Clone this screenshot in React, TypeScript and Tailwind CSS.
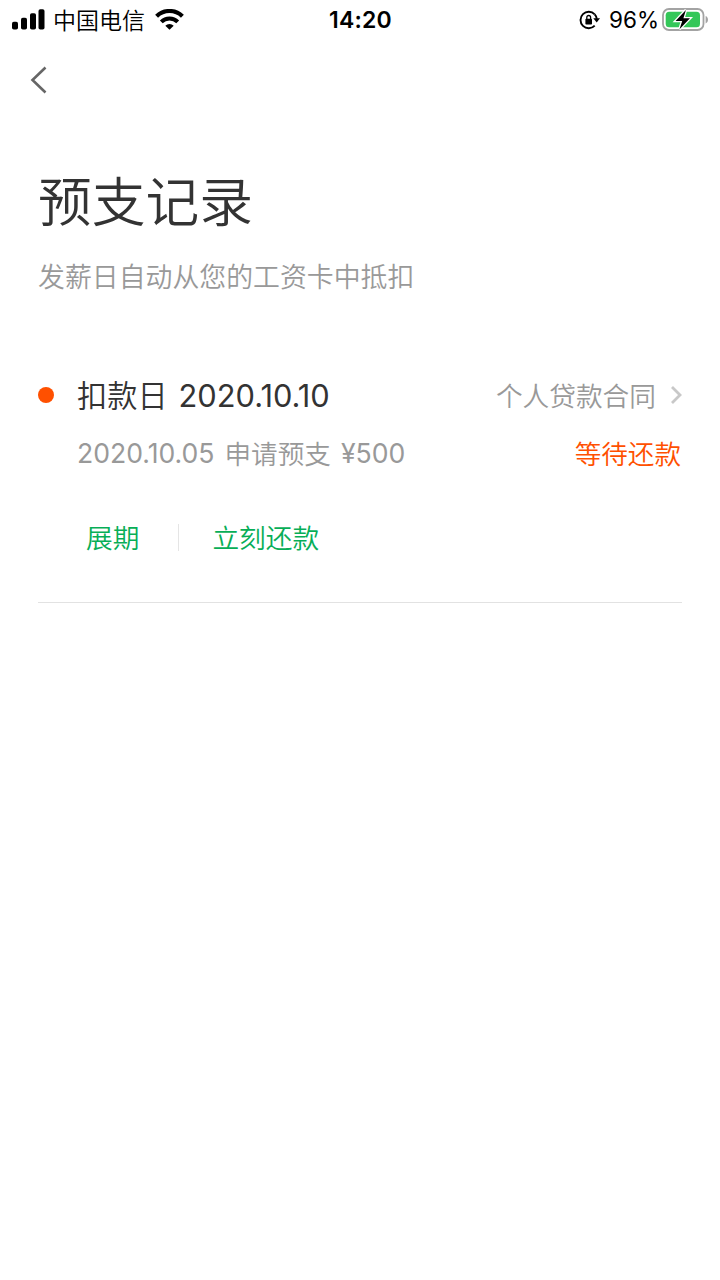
import type { ReactNode } from 'react';

interface AdvanceRecord {
  id: string;
  deductDate: string;
  applyDate: string;
  amount: number;
  status: string;
}

const records: AdvanceRecord[] = [
  {
    id: '1',
    deductDate: '2020.10.10',
    applyDate: '2020.10.05',
    amount: 500,
    status: '等待还款',
  },
];

function Latin({ className, children }: { className: string; children: ReactNode }) {
  return <span className={`font-['Inter','Noto_Sans_CJK_SC',sans-serif] ${className}`}>{children}</span>;
}

function SignalIcon() {
  return (
    <svg width="33" height="21" viewBox="0 0 33 21" className="shrink-0">
      <rect x="0" y="12.8" width="6" height="7.7" rx="1.8" />
      <rect x="9" y="8.8" width="6" height="11.7" rx="1.8" />
      <rect x="18" y="4.2" width="6" height="16.3" rx="1.8" />
      <rect x="26.5" y="0.2" width="6" height="20.3" rx="1.8" />
    </svg>
  );
}

function WifiIcon() {
  return (
    <svg width="29" height="22" viewBox="0 0 29 22" fill="none" stroke="#000" className="shrink-0">
      <path d="M1.6 7.2a18.6 18.6 0 0 1 25.8 0" strokeWidth="4.2" />
      <path d="M6.3 12.8a11.6 11.6 0 0 1 16.4 0" strokeWidth="4" />
      <path d="M14.5 20.8l-4.2-4a6 6 0 0 1 8.4 0z" fill="#000" stroke="none" />
    </svg>
  );
}

function RotationLockIcon() {
  return (
    <svg width="22" height="20" viewBox="0 0 22 20" fill="none" stroke="#000" className="shrink-0">
      <path d="M15.7 4.4A8.2 8.2 0 1 0 15.7 15.6" strokeWidth="1.9" />
      <path d="M15.7 4.4a8.2 8.2 0 0 1 2.1 4.4" strokeWidth="1.9" />
      <path d="M14.3 8.2h6.7l-3.3 4.4z" fill="#000" stroke="none" />
      <rect x="6.4" y="8.8" width="6.6" height="5.7" rx="0.8" fill="#000" stroke="none" />
      <path d="M7.8 9.5V7.4a1.9 1.9 0 0 1 3.8 0v2.1" strokeWidth="1.3" />
    </svg>
  );
}

function BatteryIcon() {
  return (
    <svg width="47" height="24" viewBox="0 0 47 24" className="shrink-0">
      <rect x="1" y="1" width="40.5" height="21" rx="6" fill="none" stroke="#a3a3a3" strokeWidth="1.8" />
      <path d="M43.6 8v7.4c1.5-.6 2.4-2 2.4-3.7s-.9-3.1-2.4-3.7z" fill="#a3a3a3" />
      <rect x="3.7" y="3.7" width="34.3" height="15.6" rx="3.5" fill="#34c759" />
      <path
        d="M23.9 2L13.6 13h6.6l-2.7 8.2L28 10.2h-6.6z"
        fill="#000"
        stroke="#fff"
        strokeWidth="2.6"
        paintOrder="stroke"
      />
    </svg>
  );
}

function StatusBar() {
  return (
    <div className="grid h-[38px] grid-cols-3 items-center pl-3 pr-[11px] text-black">
      <div className="flex items-center">
        <SignalIcon />
        <span className="-mt-0.5 ml-2 text-[23px] leading-[36px]">中国电信</span>
        <div className="ml-[10px]">
          <WifiIcon />
        </div>
      </div>
      <Latin className="text-center text-[23px] font-semibold leading-[38px] tracking-[0.2px]">14:20</Latin>
      <div className="flex items-center justify-end">
        <RotationLockIcon />
        <Latin className="ml-2 mr-[3px] pt-px text-[22.5px] font-normal leading-[38px]">96%</Latin>
        <BatteryIcon />
      </div>
    </div>
  );
}

function RecordItem({ record }: { record: AdvanceRecord }) {
  return (
    <div className="flex border-b border-[#e2e2e2] pb-10">
      <div className="mt-[17px] h-4 w-4 shrink-0 rounded-full bg-[#ff5000]" />
      <div className="ml-[23px] flex-1">
        <div className="flex h-[50px] items-center justify-between">
          <div className="flex items-center text-[30.2px] text-[#333]">
            <span>扣款日</span>
            <Latin className="ml-[11px] pt-[3px] text-[30.8px] font-normal">{record.deductDate}</Latin>
          </div>
          <div className="flex items-center text-[26.7px] text-[#999]">
            <span>个人贷款合同</span>
            <svg width="12" height="18" viewBox="0 0 12 18" fill="none" stroke="#c8c8c8" strokeWidth="2.8" className="ml-[14px]">
              <path d="M2 1l8 8-8 8" />
            </svg>
          </div>
        </div>
        <div className="mt-2 flex h-[50px] items-center justify-between text-[26.6px]">
          <div className="flex items-center text-[#999]">
            <Latin className="pt-px text-[26.6px] font-normal">{record.applyDate}</Latin>
            <span className="ml-[10px] mr-[10px]">申请预支</span>
            <Latin className="pt-px text-[26.6px] font-normal">¥{record.amount}</Latin>
          </div>
          <span className="pr-px text-[#ff5000]">{record.status}</span>
        </div>
        <div className="mt-[34px] flex h-[50px] items-center pl-[9px] text-[26.7px] text-[#07ae57]">
          <button>展期</button>
          <div className="ml-[39px] mr-[33px] h-[27px] w-px bg-[#e5e5e5]" />
          <button>立刻还款</button>
        </div>
      </div>
    </div>
  );
}

export default function App() {
  return (
    <div className="min-h-screen w-full bg-white font-['Noto_Sans_CJK_SC',sans-serif] font-[350]">
      <StatusBar />
      <div className="flex h-[83px] items-center pl-[30px]">
        <svg width="18" height="28" viewBox="0 0 18 28" fill="none" stroke="#666" strokeWidth="2.6">
          <path d="M15.5 1.5L2.5 14l13 12.5" />
        </svg>
      </div>
      <div className="px-[38px] pt-[38px]">
        <h1 className="text-[53.76px] leading-[80px] text-[#333]">预支记录</h1>
        <p className="mt-[17px] text-[26.88px] leading-10 text-[#999]">发薪日自动从您的工资卡中抵扣</p>
        <div className="mt-[74px]">
          {records.map((record) => (
            <RecordItem key={record.id} record={record} />
          ))}
        </div>
      </div>
    </div>
  );
}
